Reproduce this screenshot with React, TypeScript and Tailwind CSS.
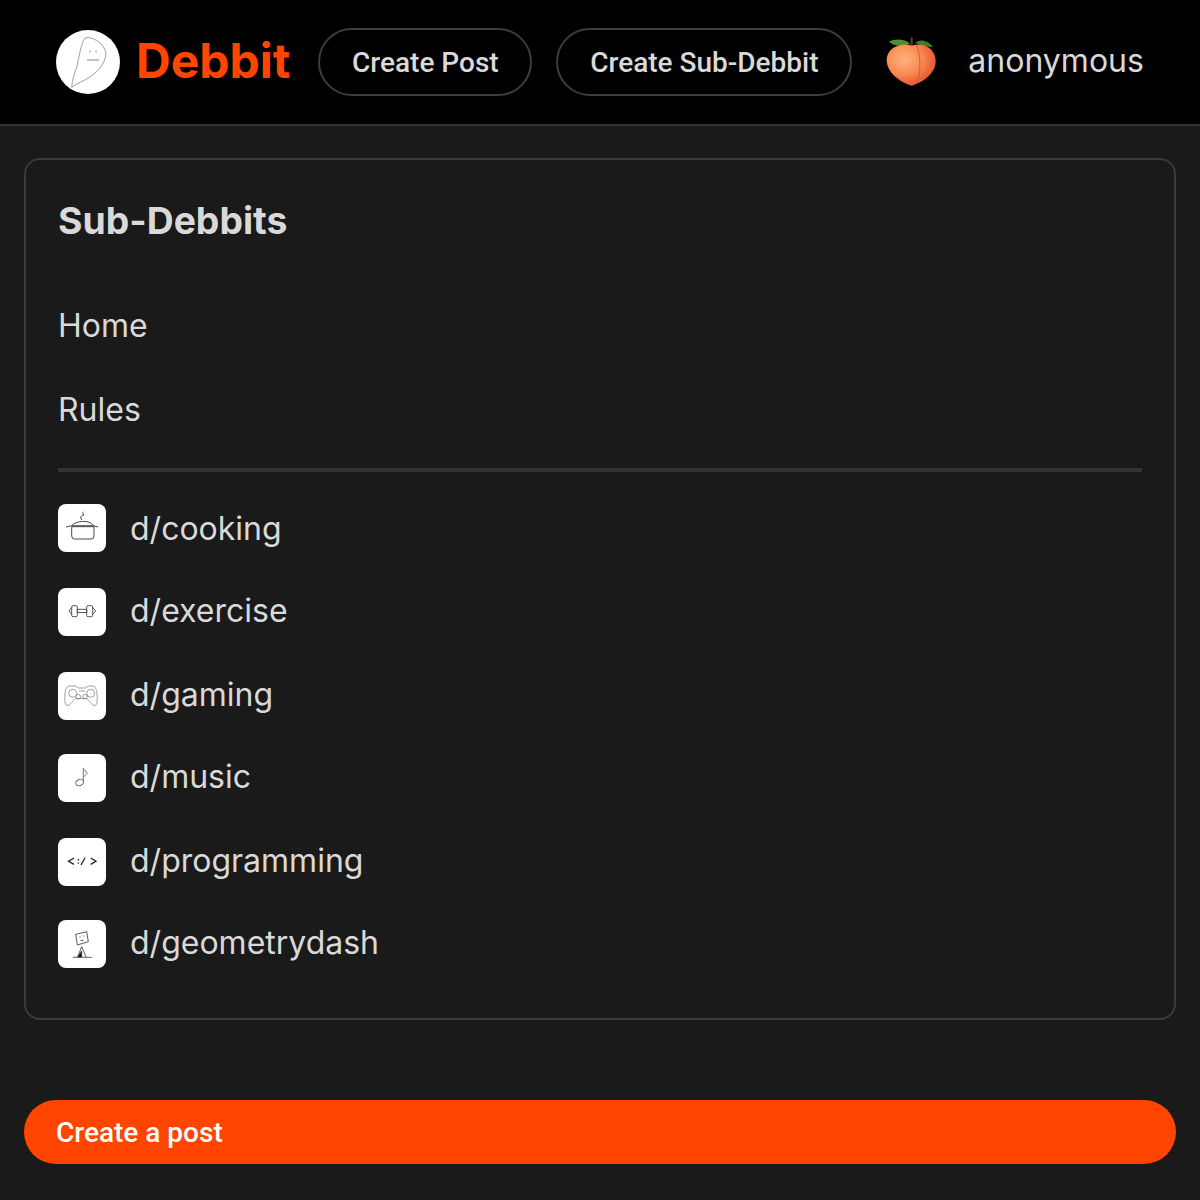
const inter = "font-['Inter','Liberation_Sans',sans-serif]";
const roboto = "font-['Roboto','Liberation_Sans',sans-serif]";

function Logo() {
  return (
    <div className="flex h-16 w-16 shrink-0 items-center justify-center rounded-full bg-white">
      <svg viewBox="0 0 64 64" className="h-16 w-16" fill="none" stroke="#777" strokeWidth="0.7">
        <path d="M29 8 C35 6 47 12 49.7 21.7 C51 30 44 40 34 47 C28 51 21 53 15.7 57.3 C16 50 19 42 21 36 C23 27 25 14 29 8 Z" />
        <path d="M34 20.5 v2 M40 20.5 v2 M31 30 h12" stroke="#555" />
      </svg>
    </div>
  );
}

function Peach() {
  return (
    <svg viewBox="0 0 52 52" className="h-[52px] w-[52px] shrink-0">
      <defs>
        <radialGradient id="p" cx="36%" cy="36%" r="72%">
          <stop offset="0" stopColor="#ffb080" />
          <stop offset="0.5" stopColor="#f88c52" />
          <stop offset="1" stopColor="#e4492a" />
        </radialGradient>
      </defs>
      <path d="M26.7 9 C26.7 6 26.7 4 26.7 1.3" stroke="#5c4026" strokeWidth="2" fill="none" />
      <path d="M4 5.7 C10 2 20 3 25 7.5 C18 10.5 9 10.5 4 5.7 Z" fill="#4d8f2e" />
      <path d="M30 7 C34 3 42 3 48.3 11.3 C41 10.5 35 9.5 30 7 Z" fill="#3d7f28" />
      <path d="M26.7 49.7 C14 46 1.7 36 1.7 24 C1.7 13 14 6 27 9.5 C39 5.5 50.7 13 50.7 25 C50.7 37 39 46 26.7 49.7 Z" fill="url(#p)" />
      <path d="M31.5 9 C36 20 36 36 32 47" stroke="#cf5f36" strokeWidth="1" fill="none" />
    </svg>
  );
}

function Pot() {
  return (
    <svg viewBox="0 0 48 48" className="h-12 w-12" fill="none" stroke="#333" strokeWidth="0.9">
      <path d="M13.7 22.7 h22.3 v9.3 a3 3 0 0 1 -3 3 h-16.3 a3 3 0 0 1 -3 -3 Z" />
      <path d="M13.7 21.7 C17 17 32 15 35.3 21.7 Z M8 23 l5.7 -1.3 M40 23 l-5 -1.3" />
      <path d="M24 16 c-3 -3 0 -5 2 -5 c-2 -1 -1 -2 -1 -3.3" />
    </svg>
  );
}
function Dumbbell() {
  return (
    <svg viewBox="0 0 48 48" className="h-12 w-12" fill="none" stroke="#444" strokeWidth="0.9">
      <path d="M19.3 21.3 h9.4 v3.2 h-9.4 Z" />
      <path d="M15 17.7 h3 q1.3 0 1.3 1.3 v8.4 q0 1.3 -1.3 1.3 h-3 q-1.3 0 -1.3 -1.3 v-8.4 q0 -1.3 1.3 -1.3 Z" />
      <path d="M30 17.7 h3.4 q1.3 0 1.3 1.3 v8.4 q0 1.3 -1.3 1.3 h-3.4 q-1.3 0 -1.3 -1.3 v-8.4 q0 -1.3 1.3 -1.3 Z" />
      <path d="M13.7 19.5 l-2.7 3.5 2.7 3.5 M34.7 19.5 l3 3.5 -3 3.5" />
    </svg>
  );
}
function Pad() {
  return (
    <svg viewBox="0 0 48 48" className="h-12 w-12" fill="none" stroke="#777" strokeWidth="0.7">
      <path d="M14 14 h4 l2 2 h8 l2 -2 h4 c3.5 0 4.5 3 5 8 c0.5 5 0.5 11 -2 11.5 c-3 0.5 -6 -5.5 -8.5 -7 h-11 c-2.5 1.5 -5.5 7.5 -8.5 7 c-2.5 -0.5 -2.5 -6.5 -2 -11.5 c0.5 -5 1.5 -8 5 -8 Z" />
      <circle cx="14.7" cy="21.3" r="4" />
      <circle cx="32.7" cy="21.3" r="4" />
      <circle cx="20.3" cy="24.7" r="2.3" />
      <circle cx="27" cy="24.7" r="2.3" />
      <path d="M21 19 h6" />
    </svg>
  );
}
function Note() {
  return (
    <svg viewBox="0 0 48 48" className="h-12 w-12" fill="none" stroke="#666" strokeWidth="0.9">
      <ellipse cx="21.7" cy="28.5" rx="4" ry="3" transform="rotate(-25 21.7 28.5)" />
      <path d="M25.3 27 L25.3 14.3 L29.3 19.3 L26 22.7" />
    </svg>
  );
}
function Code() {
  return (
    <svg viewBox="0 0 48 48" className="h-12 w-12" fill="none" stroke="#222" strokeWidth="1.3">
      <path d="M16 20 l-5.5 3.2 5.5 3.2 M32.7 20 l5.3 3.2 -5.3 3.2 M27 19.7 l-4 7.3 M20.3 21 v1.4 M20.3 24.4 v1.4" />
    </svg>
  );
}
function Cube() {
  return (
    <svg viewBox="0 0 48 48" className="h-12 w-12" fill="none" stroke="#333" strokeWidth="0.8">
      <path d="M17.7 14.3 L28.7 11.7 L30.3 21.7 L19.3 25 Z" />
      <path d="M22 16.5 v1 M26 15.5 v1 M22.5 20.5 h3" />
      <path d="M23.7 26.7 L19.7 36.7 M23.7 26.7 L28 36.7 M14.7 37.3 h19" />
      <path d="M23.7 31 L19.7 37 h4 Z" fill="#111" />
    </svg>
  );
}

const subs = [
  { name: "d/cooking", Icon: Pot, gap: "", nudge: "pt-0.5" },
  { name: "d/exercise", Icon: Dumbbell, gap: "mt-9", nudge: "pb-0.5" },
  { name: "d/gaming", Icon: Pad, gap: "mt-9", nudge: "pb-0.5" },
  { name: "d/music", Icon: Note, gap: "mt-[34px]", nudge: "pb-0.5" },
  { name: "d/programming", Icon: Code, gap: "mt-9", nudge: "pb-0.5" },
  { name: "d/geometrydash", Icon: Cube, gap: "mt-[34px]", nudge: "pb-0.5" },
];

export default function App() {
  return (
    <div className={`min-h-[1200px] bg-[#1a1a1a] ${inter}`}>
      <header className="flex h-[126px] items-center border-b-2 border-[#333] bg-black pl-14">
        <Logo />
        <span className="mb-0.5 ml-[16px] text-[48px] leading-none font-bold text-[#ff4500]">Debbit</span>
        <button className={`ml-7 h-[68px] w-[214px] rounded-full border-2 border-[#3d3d3d] pt-0.5 text-[28px] font-medium text-[#d9d9d9] ${roboto}`}>Create Post</button>
        <button className={`ml-6 h-[68px] w-[296px] rounded-full border-2 border-[#3d3d3d] pt-0.5 text-[28px] font-medium text-[#d9d9d9] ${roboto}`}>Create Sub-Debbit</button>
        <div className="ml-[33px]"><Peach /></div>
        <span className="mb-0.5 ml-[31px] text-[32px] leading-none text-[#d9d9d9]">anonymous</span>
      </header>
      <main className="px-6 pt-8">
        <section className="h-[862px] rounded-2xl border-2 border-[#3a3a3a] px-8 pt-[39px]">
          <h2 className="text-[37.33px] leading-[44px] font-bold text-[#d9d9d9]">Sub-Debbits</h2>
          <div className="mt-[63px] flex flex-col gap-[44px] text-[32px] leading-[40px] text-[#d9d9d9]">
            <a>Home</a>
            <a>Rules</a>
          </div>
          <div className="mt-[38px] h-1 bg-[#333]" />
          <ul className="mt-8 flex flex-col">
            {subs.map(({ name, Icon, gap, nudge }) => (
              <li key={name} className={`flex h-12 items-center gap-6 ${gap}`}>
                <div className="h-12 w-12 rounded-lg bg-white"><Icon /></div>
                <span className={`text-[32px] leading-none text-[#d9d9d9] ${nudge}`}>{name}</span>
              </li>
            ))}
          </ul>
        </section>
        <button className={`mt-20 flex h-16 w-full items-center rounded-full bg-[#ff4500] pt-0.5 pl-8 text-[28px] font-medium text-white ${roboto}`}>Create a post</button>
      </main>
    </div>
  );
}
